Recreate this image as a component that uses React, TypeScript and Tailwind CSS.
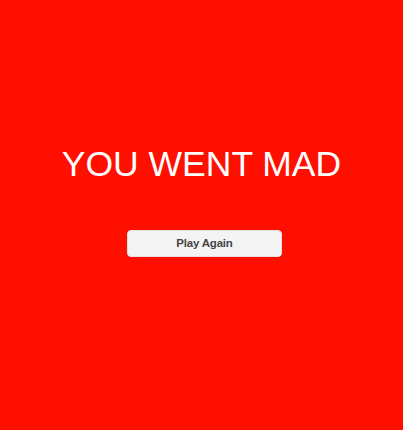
import React from 'react';

const App: React.FC = () => {
  const handlePlayAgain = () => {
    // restart would go here
  };

  return (
    <div
      className="flex h-[430px] w-full flex-col items-center bg-[#ff0f00] pt-[144px]"
      style={{ fontFamily: '"Liberation Sans", Arial, sans-serif' }}
    >
      <h1 className="text-[35.5px] leading-[40px] font-normal text-white">YOU WENT MAD</h1>
      <button
        onClick={handlePlayAgain}
        className="mt-[46px] ml-[6px] h-[27px] w-[155px] rounded-[4px] border border-[#e2e2e2] bg-[#f4f4f4] text-[11.5px] font-bold tracking-[-0.2px] text-[#444444]"
      >
        Play Again
      </button>
    </div>
  );
};

export default App;
